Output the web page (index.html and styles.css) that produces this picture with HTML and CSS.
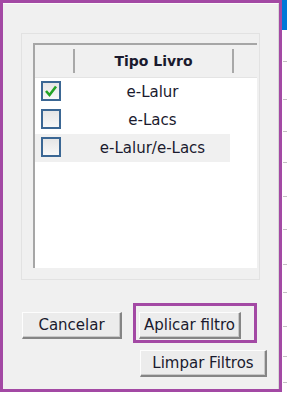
FILE: index.html
```html
<!DOCTYPE html>
<html lang="pt">
<head>
    <meta charset="UTF-8">
    <meta name="viewport" content="width=device-width, initial-scale=1.0">
    <title>Filtro Tipo Livro</title>
    <link rel="stylesheet" href="styles.css">
</head>
<body>

    <div class="tela">
        <!-- Janela de filtro -->
        <div class="moldura">
            <div class="dialogo">

                <div class="painel">
                    <div class="grade">
                        <div class="cabecalho">
                            <div class="col-check"></div>
                            <div class="sep"></div>
                            <div class="col-tipo">Tipo Livro</div>
                            <div class="sep"></div>
                        </div>

                        <div class="linha">
                            <div class="col-check">
                                <span class="caixa">
                                    <svg width="16" height="16" viewBox="0 0 16 16"><polyline points="3,8 6.5,12 13,3.5" fill="none" stroke="#23a326" stroke-width="2.6"/></svg>
                                </span>
                            </div>
                            <div class="col-tipo">e-Lalur</div>
                        </div>
                        <div class="linha">
                            <div class="col-check"><span class="caixa"></span></div>
                            <div class="col-tipo">e-Lacs</div>
                        </div>
                        <div class="linha selecionada">
                            <div class="col-check"><span class="caixa"></span></div>
                            <div class="col-tipo">e-Lalur/e-Lacs</div>
                        </div>
                    </div>
                </div>

                <div class="botoes">
                    <button class="btn btn-cancelar">Cancelar</button>
                    <button class="btn btn-aplicar">Aplicar filtro</button>
                    <!-- destaque da anotação -->
                    <span class="destaque"></span>
                </div>
                <div class="botoes botoes-limpar">
                    <button class="btn btn-limpar">Limpar Filtros</button>
                </div>

            </div>
        </div>

        <!-- Borda da janela de trás -->
        <div class="lateral">
            <div class="azul"></div>
            <div class="marca" style="margin-top: 31px"></div>
            <div class="marca" style="margin-top: 37px"></div>
            <div class="marca" style="margin-top: 31px"></div>
            <div class="marca" style="margin-top: 30px"></div>
            <div class="marca" style="margin-top: 33px"></div>
            <div class="marca" style="margin-top: 32px"></div>
            <div class="marca" style="margin-top: 34px"></div>
            <div class="marca" style="margin-top: 27px"></div>
            <div class="marca" style="margin-top: 33px"></div>
            <div class="marca" style="margin-top: 29px"></div>
            <div class="marca" style="margin-top: 25px"></div>
        </div>
    </div>

</body>
</html>
```

FILE: styles.css
```css
* { box-sizing: border-box; }
body { margin: 0; background: #fff; font-family: "DejaVu Sans", Verdana, sans-serif; color: #1a1a2e; }
.tela { display: flex; width: 287px; height: 393px; }
.moldura { width: 283px; height: 392px; border: 3px solid #a349a4; }
.dialogo { height: 100%; background: #f0f0f0; border-top: 1px solid #fbfbfb; border-right: 1px solid #d8d8d8; padding: 29px 0 0 18px; }

.painel { width: 239px; height: 247px; border: 1px solid #e2e2e2; padding: 9px 2px 11px 11px; }
.grade { height: 100%; background: #fff; border-top: 2px solid #a6a6a6; border-left: 2px solid #a6a6a6; }

.cabecalho { display: flex; align-items: center; height: 33px; background: #f0f0f0; border-bottom: 1px solid #e4e4e4; }
.cabecalho .col-tipo { font-weight: bold; font-size: 14px; }
.sep { width: 2px; height: 24px; background: #a8a8a8; }

.col-check { width: 38px; display: flex; align-items: center; padding-left: 6px; }
.col-tipo { width: 157px; text-align: center; font-size: 15px; }

.linha { display: flex; align-items: center; width: 195px; height: 28px; }
.linha .col-check { width: 40px; }
.linha .col-tipo { width: 155px; }
.selecionada { background: #f0f0f0; }

.caixa { display: flex; align-items: center; justify-content: center; width: 20px; height: 20px; margin-top: -2px; border: 2px solid #3b6794; background: linear-gradient(#e6e6e6, #f8f8f8); }

.botoes { position: relative; display: flex; gap: 17px; margin-top: 32px; padding-left: 1px; }
.btn { height: 27px; padding: 0; font-family: "DejaVu Sans", Verdana, sans-serif; font-size: 15px; color: #1a1a2e; background: #ececec; border-top: 1px solid #fdfdfd; border-left: 1px solid #fdfdfd; border-right: 2px solid #858585; border-bottom: 2px solid #858585; box-shadow: inset -1px -1px 0 #c8c8c8; }
.btn-cancelar { width: 100px; }
.btn-aplicar { width: 102px; }
.botoes-limpar { justify-content: flex-end; margin-top: 11px; padding-right: 11px; }
.btn-limpar { width: 127px; }

.destaque { position: absolute; left: 112px; top: -9px; width: 124px; height: 40px; border: 3px solid #a349a4; }

.lateral { flex: 1; }
.azul { height: 30px; background: #0078d7; }
.marca { height: 1px; width: 4px; margin-left: 1px; background: #c4c4c4; }
```
